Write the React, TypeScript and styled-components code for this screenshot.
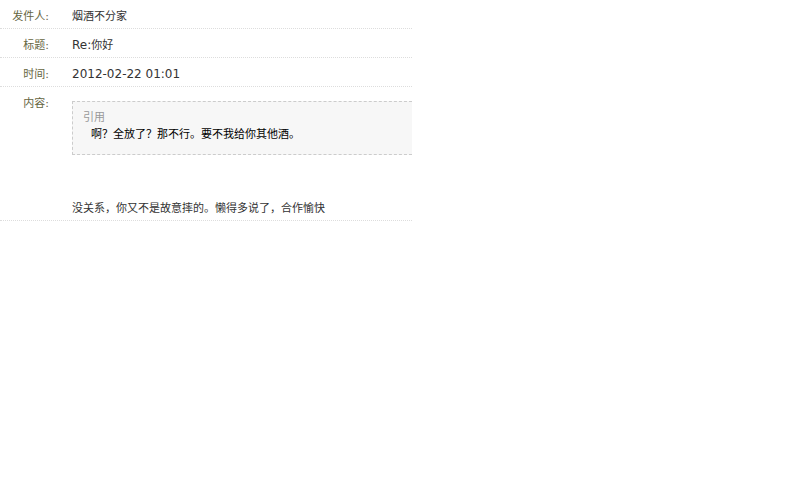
import React from "react";
import styled, { createGlobalStyle } from "styled-components";

interface IField {
  label: string;
  value: React.ReactNode;
}

const GlobalStyle = createGlobalStyle`
  html, body {
    margin: 0;
    padding: 0;
    background: #fff;
  }
  body {
    font-family: "DejaVu Sans", "Noto Sans CJK SC", sans-serif;
    font-size: 11px;
    color: #333;
  }
`;

// latin text sits a bit larger than the CJK glyphs in the original
const Latin = styled.span`
  font-size: 12px;
`;

const MessageTable = styled.div`
  width: 412px;
  display: flex;
  flex-direction: column;
`;

const Row = styled.div`
  display: grid;
  grid-template-columns: 72px 1fr;
  border-bottom: 1px dotted #ddd;
  line-height: 17px;
`;

const Label = styled.div`
  color: #66663f;
  text-align: right;
  padding: 8px 23px 3px 0;
`;

const Value = styled.div<{ $tall?: boolean }>`
  padding: ${(p) => (p.$tall ? "14px 0 3px" : "8px 0 3px")};
  min-width: 0;
`;

const Quote = styled.div`
  background: #f7f7f7;
  border: 1px dashed #ccc;
  border-right: none;
  padding: 8px 10px 11px;
  line-height: 16px;
`;

const QuoteTitle = styled.div`
  color: #999;
`;

const QuoteText = styled.div`
  padding: 1px 0 0 8px;
  color: #000;
`;

const Reply = styled.div`
  margin-top: 46px;
  line-height: 16px;
`;

const fields: IField[] = [
  { label: "发件人:", value: "烟酒不分家" },
  {
    label: "标题:",
    value: (
      <>
        <Latin>Re:</Latin>你好
      </>
    ),
  },
  { label: "时间:", value: <Latin>2012-02-22 01:01</Latin> },
];

const App = () => {
  return (
    <>
      <GlobalStyle />
      <MessageTable>
        {fields.map(({ label, value }) => (
          <Row key={label}>
            <Label>{label}</Label>
            <Value>{value}</Value>
          </Row>
        ))}
        <Row>
          <Label>内容:</Label>
          <Value $tall>
            <Quote>
              <QuoteTitle>引用</QuoteTitle>
              <QuoteText>啊？全放了？那不行。要不我给你其他酒。</QuoteText>
            </Quote>
            <Reply>没关系，你又不是故意摔的。懒得多说了，合作愉快</Reply>
          </Value>
        </Row>
      </MessageTable>
    </>
  );
};

export default App;
